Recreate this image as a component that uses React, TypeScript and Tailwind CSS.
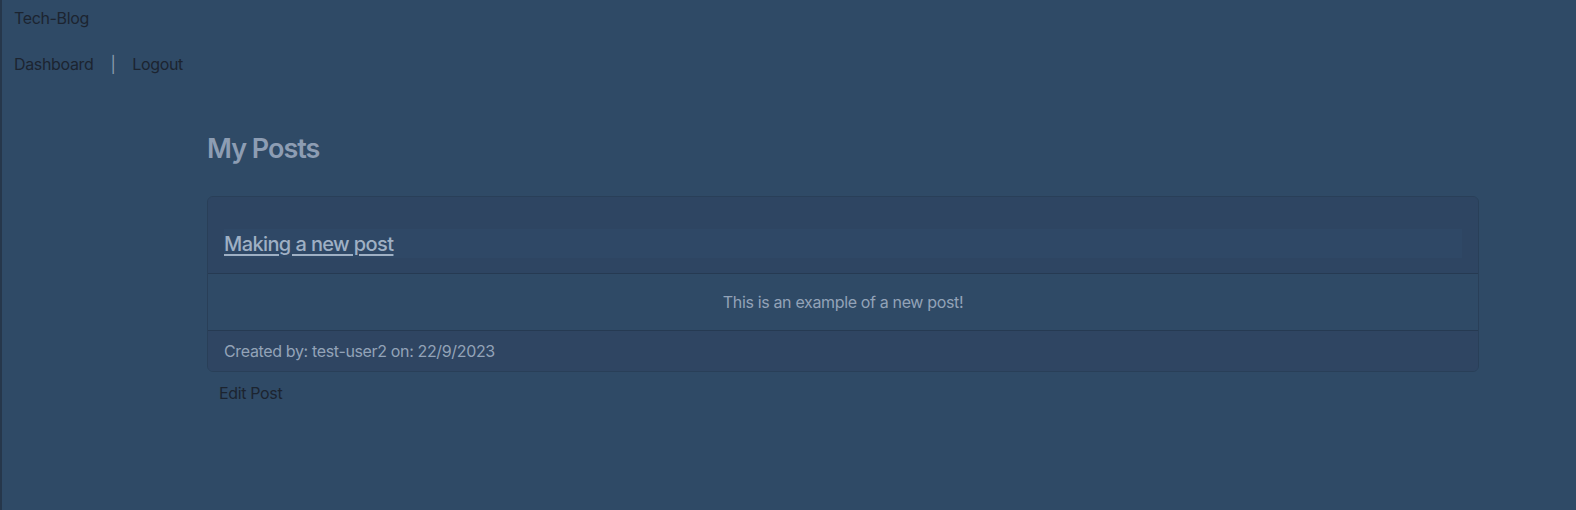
export default function App() {
  return (
    <div className="min-h-[510px] w-full bg-[#2f4a66] border-l-2 border-[#26374b] font-['Inter',sans-serif] text-[16px] tracking-[-0.35px]">
      <header className="px-3 pt-2">
        <h1 className="text-[16px] leading-5 text-[#1c2430]">Tech-Blog</h1>
        <nav className="flex items-center mt-[26px] text-[#1c2430] leading-5">
          <a href="#">Dashboard</a>
          <span className="mx-[17px] text-[#8a9bb0]">|</span>
          <a href="#">Logout</a>
        </nav>
      </header>

      <main className="ml-[205px] w-[1272px] mt-[59px]">
        <h2 className="text-[27px] font-semibold leading-8 tracking-[-1px] text-[#8d9db3] mb-[31px]">My Posts</h2>

        <div className="rounded-md border border-[#293f58] overflow-hidden">
          <div className="bg-[#2e4562] border-b border-[#263a52] px-4 pt-[32px] pb-[15px]">
            <div className="bg-[#2f4866] h-[29px] flex items-center">
              <a href="#" className="text-[20px] font-medium tracking-[-0.6px] text-[#9fb0c4] underline underline-offset-[3px]">
                Making a new post
              </a>
            </div>
          </div>
          <div className="bg-[#2f4a66] border-b border-[#263a52] h-[57px] flex items-center justify-center text-[#93a3b8]">
            This is an example of a new post!
          </div>
          <div className="bg-[#2f4562] h-[40px] px-4 flex items-center text-[#93a3b8]">
            Created by: test-user2 on: 22/9/2023
          </div>
        </div>

        <button className="mt-[9px] ml-3 text-[#1c2430]">Edit Post</button>
      </main>
    </div>
  )
}
